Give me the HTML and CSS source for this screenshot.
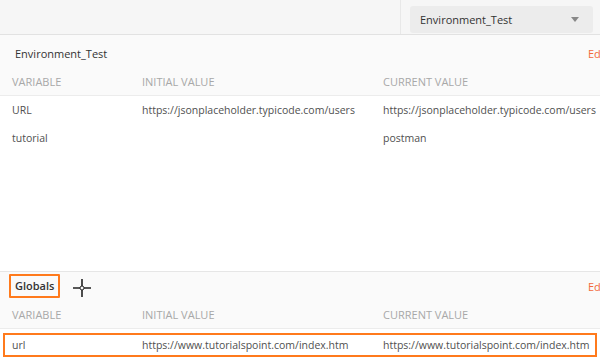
FILE: index.html
```html
<!DOCTYPE html>
<html lang="en">
<head>
    <meta charset="UTF-8">
    <title>Manage Environments</title>
    <link rel="stylesheet" href="styles.css">
</head>
<body>
    <div class="topbar">
        <div class="topbar-spacer"></div>
        <div class="env-picker">
            <div class="env-select">
                <span>Environment_Test</span>
                <span class="caret"></span>
            </div>
        </div>
    </div>

    <div class="section">
        <div class="section-head">
            <div class="section-title">
                <span class="title-text">Environment_Test</span>
                <span class="edit-link">Edit</span>
            </div>
            <div class="vars-row cols">
                <span>VARIABLE</span>
                <span>INITIAL VALUE</span>
                <span>CURRENT VALUE</span>
            </div>
        </div>
        <div class="vars-row">
            <span>URL</span>
            <span>https://jsonplaceholder.typicode.com/users</span>
            <span>https://jsonplaceholder.typicode.com/users</span>
        </div>
        <div class="vars-row">
            <span>tutorial</span>
            <span></span>
            <span>postman</span>
        </div>
    </div>

    <div class="section globals">
        <div class="section-head">
            <div class="section-title">
                <span class="title-text bold marked">Globals</span>
                <svg class="cursor" width="20" height="20" viewBox="0 0 20 20">
                    <path d="M10 1v7M10 12v7M1 10h7M12 10h7" stroke="#222" stroke-width="1.6"/>
                    <circle cx="10" cy="10" r="2" fill="none" stroke="#222" stroke-width="1"/>
                </svg>
                <span class="edit-link">Edit</span>
            </div>
            <div class="vars-row cols">
                <span>VARIABLE</span>
                <span>INITIAL VALUE</span>
                <span>CURRENT VALUE</span>
            </div>
        </div>
        <div class="vars-row marked-row">
            <span>url</span>
            <span>https://www.tutorialspoint.com/index.htm</span>
            <span>https://www.tutorialspoint.com/index.htm</span>
        </div>
    </div>
</body>
</html>
```

FILE: styles.css
```css
body {
    margin: 0;
    font-family: "Open Sans", Arial, sans-serif;
    font-size: 10.5px;
    color: #505050;
    background: #fff;
    overflow: hidden;
}
.topbar {
    display: flex;
    height: 34px;
    background: #f6f6f6;
    border-bottom: 1px solid #e2e2e2;
}
.topbar-spacer {
    width: 400px;
    border-right: 1px solid #e8e8e8;
}
.env-picker {
    flex: 1;
    padding: 6px 7px 0 9px;
}
.env-select {
    display: flex;
    align-items: center;
    justify-content: space-between;
    height: 27px;
    padding: 0 14px 0 10px;
    background: #ececec;
    border-radius: 3px;
    font-size: 11px;
    color: #333;
}
.caret {
    width: 0;
    height: 0;
    border-left: 4px solid transparent;
    border-right: 4px solid transparent;
    border-top: 5px solid #888;
}
.section {
    height: 236px;
}
.section-head {
    background: #fafafa;
    border-bottom: 1px solid #ececec;
}
.section-title {
    display: flex;
    align-items: center;
    height: 28px;
    padding: 4px 0 0 15px;
    font-size: 11px;
    white-space: nowrap;
    overflow: hidden;
}
.title-text {
    color: #333;
}
.bold {
    font-weight: 600;
}
.edit-link {
    margin-left: auto;
    margin-right: -18px;
    width: 30px;
    color: #f26b3a;
}
.vars-row {
    display: grid;
    grid-template-columns: 130px 241px 1fr;
    align-items: center;
    height: 28px;
    padding-left: 12px;
    white-space: nowrap;
}
.vars-row.cols {
    font-size: 11px;
    color: #a8a8a8;
}
.globals {
    height: auto;
    border-top: 1px solid #e6e6e6;
}
.globals .section-title {
    height: 28px;
    padding-top: 0;
}
.marked {
    margin-left: -6px;
    padding: 2px 4px 3px;
    border: 2.5px solid #ff7a1c;
    border-radius: 1px;
}
.cursor {
    margin-left: 12px;
    margin-top: 4px;
}
.marked-row {
    margin: 4px 3px 0;
    height: 20px;
    padding-left: 7px;
    grid-template-columns: 130px 241px 1fr;
    border: 2.5px solid #ff7a1c;
}
```
